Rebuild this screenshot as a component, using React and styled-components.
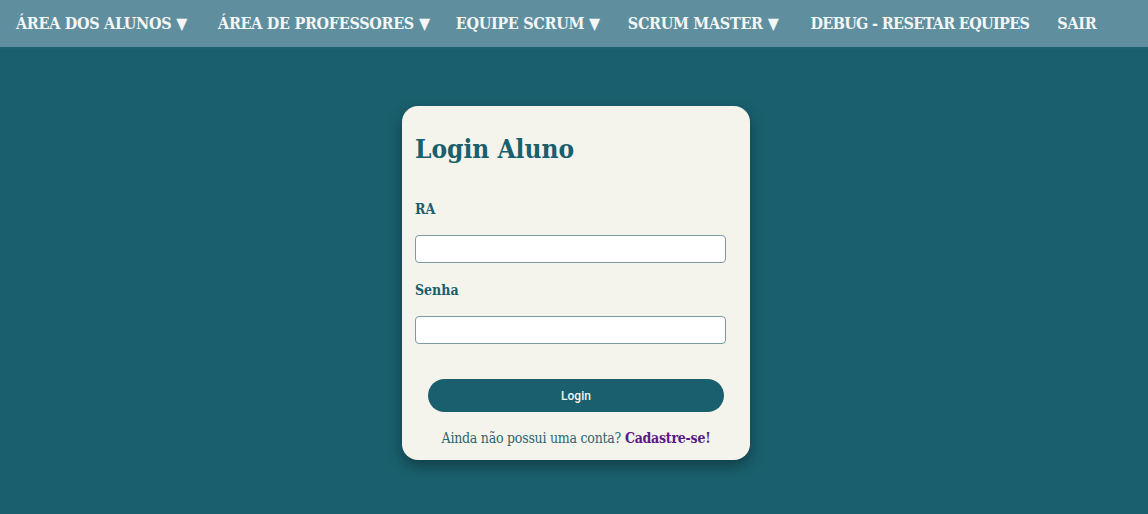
import React from 'react'
import styled, { createGlobalStyle } from 'styled-components'

const Global = createGlobalStyle`
  html, body {
    margin: 0;
    padding: 0;
    background: #1a5f6d;
    font-family: "DejaVu Serif", "Liberation Serif", serif;
  }
`

const Page = styled.div`
  min-height: 514px;
  background: #1a5f6d;
`

const Nav = styled.nav`
  height: 47px;
  background: #5f8f9e;
  border-bottom: 2px solid #1d6271;
  display: flex;
  align-items: center;
  padding-left: 16px;
`

const NavItem = styled.a`
  color: #f4f6f6;
  font-family: "DejaVu Serif Condensed", "DejaVu Serif", serif;
  font-weight: bold;
  font-size: 16px;
  letter-spacing: ${p => p.$spacing}px;
  white-space: nowrap;
  margin-right: ${p => p.$gap}px;
  text-decoration: none;
  cursor: pointer;
`

const Caret = styled.span`
  font-size: 16px;
  margin-left: 5px;
`

const Main = styled.main`
  display: flex;
  justify-content: center;
  padding-top: 57px;
  padding-left: 4px;
`

const Card = styled.form`
  width: 348px;
  box-sizing: border-box;
  background: #f4f4ed;
  border-radius: 16px;
  padding: 28px 13px 13px 13px;
  box-shadow: 0 6px 14px rgba(0, 0, 0, 0.35);
  display: flex;
  flex-direction: column;
`

const Title = styled.h2`
  margin: 0 0 36px 0;
  color: #1a5f6d;
  font-family: "DejaVu Serif Condensed", "DejaVu Serif", serif;
  font-size: 26px;
  font-weight: bold;
  line-height: 30px;
`

const Label = styled.label`
  color: #1a5f6d;
  font-family: "DejaVu Serif Condensed", "DejaVu Serif", serif;
  font-weight: bold;
  font-size: 14px;
  line-height: 18px;
  margin-bottom: 17px;
`

const Input = styled.input`
  width: 311px;
  height: 28px;
  box-sizing: border-box;
  border: 1.5px solid #7d9aa0;
  border-radius: 4px;
  background: #fff;
  outline: none;
  margin-bottom: ${p => p.$mb}px;
`

const Button = styled.button`
  align-self: center;
  width: 296px;
  height: 33px;
  border: none;
  border-radius: 17px;
  background: #1a5f6d;
  color: #f4f4ed;
  font-family: Roboto, "Noto Sans", sans-serif;
  font-weight: 500;
  font-size: 12px;
  padding-top: 2px;
  cursor: pointer;
`

const Footer = styled.p`
  margin: 17px 0 0 0;
  text-align: center;
  color: #2f6470;
  font-family: "DejaVu Serif Condensed", "DejaVu Serif", serif;
  font-size: 14px;
  letter-spacing: -0.25px;
  line-height: 18px;
`

const SignUp = styled.a`
  color: #5a1a86;
  font-weight: bold;
  text-decoration: none;
`

const items = [
  { label: 'ÁREA DOS ALUNOS', caret: true, gap: 31, spacing: -0.3 },
  { label: 'ÁREA DE PROFESSORES', caret: true, gap: 26, spacing: -0.3 },
  { label: 'EQUIPE SCRUM', caret: true, gap: 28, spacing: -0.3 },
  { label: 'SCRUM MASTER', caret: true, gap: 32, spacing: -0.3 },
  { label: 'DEBUG - RESETAR EQUIPES', caret: false, gap: 28, spacing: -0.65 },
  { label: 'SAIR', caret: false, gap: 0, spacing: -0.3 },
]

export default function App() {
  return (
    <Page>
      <Global />
      <Nav>
        {items.map(i => (
          <NavItem key={i.label} $gap={i.gap} $spacing={i.spacing}>
            {i.label}
            {i.caret && <Caret>▼</Caret>}
          </NavItem>
        ))}
      </Nav>
      <Main>
        <Card onSubmit={e => e.preventDefault()}>
          <Title>Login Aluno</Title>
          <Label>RA</Label>
          <Input type="text" $mb={18} />
          <Label>Senha</Label>
          <Input type="password" $mb={35} />
          <Button type="submit">Login</Button>
          <Footer>
            Ainda não possui uma conta? <SignUp>Cadastre-se!</SignUp>
          </Footer>
        </Card>
      </Main>
    </Page>
  )
}
